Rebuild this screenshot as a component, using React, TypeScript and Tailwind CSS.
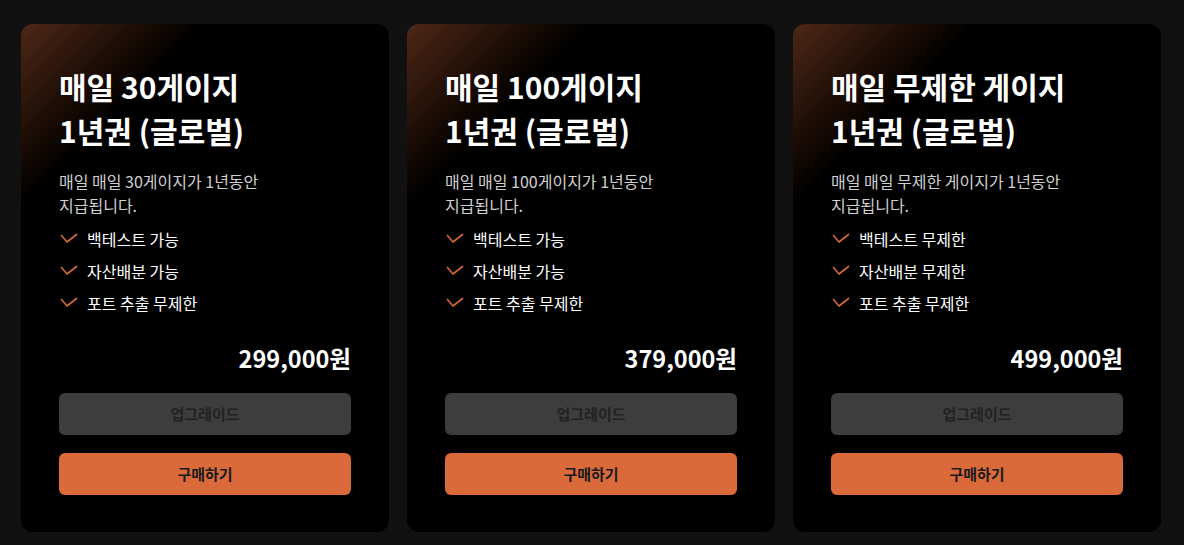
const plans = [
  {
    title: '매일 30게이지',
    desc: '매일 매일 30게이지가 1년동안 지급됩니다.',
    features: ['백테스트 가능', '자산배분 가능', '포트 추출 무제한'],
    price: '299,000원',
  },
  {
    title: '매일 100게이지',
    desc: '매일 매일 100게이지가 1년동안 지급됩니다.',
    features: ['백테스트 가능', '자산배분 가능', '포트 추출 무제한'],
    price: '379,000원',
  },
  {
    title: '매일 무제한 게이지',
    desc: '매일 매일 무제한 게이지가 1년동안 지급됩니다.',
    features: ['백테스트 무제한', '자산배분 무제한', '포트 추출 무제한'],
    price: '499,000원',
  },
];

function CheckMark() {
  return (
    <svg width="18" height="12" viewBox="0 0 18 12" fill="none" className="shrink-0">
      <polyline points="1.5,2.5 7,9 16.5,1.5" stroke="#cf673a" strokeWidth="1.7" strokeLinecap="round" strokeLinejoin="round" />
    </svg>
  );
}

export default function App() {
  return (
    <main
      className="min-h-[545px] w-full bg-[#111111] pl-[21px] pt-[24px]"
      style={{ fontFamily: '"Noto Sans CJK KR", "Noto Sans", sans-serif' }}
    >
      <div className="flex gap-[18px]">
        {plans.map((plan) => (
          <section
            key={plan.price}
            className="flex h-[508px] w-[368px] flex-col rounded-xl bg-[linear-gradient(135deg,#4e2817_0%,#1f0e06_13%,#000_21%)] px-[38px] pt-[40px]"
          >
            <h2 className="text-[30px] font-semibold leading-[44px] text-white">
              {plan.title}
              <br />
              1년권 (글로벌)
            </h2>

            <p className="mt-[17px] max-w-[250px] break-keep text-base leading-6 text-[#d0d0d0]">{plan.desc}</p>

            <ul className="mt-3 flex flex-col gap-3">
              {plan.features.map((f) => (
                <li key={f} className="flex items-center gap-[9px] pl-[1px] text-base leading-5 text-white">
                  <CheckMark />
                  {f}
                </li>
              ))}
            </ul>

            <div className="mt-[29px] text-right text-[23.5px] font-bold leading-8 text-white">{plan.price}</div>

            <button className="mt-[19px] h-[42px] w-full rounded-md bg-[#3d3d3d] text-[15px] font-bold text-[#222222]">
              업그레이드
            </button>
            <button className="mt-[18px] h-[42px] w-full rounded-md bg-[#db6a3a] text-[15px] font-bold text-[#1a1a1a]">
              구매하기
            </button>
          </section>
        ))}
      </div>
    </main>
  );
}
